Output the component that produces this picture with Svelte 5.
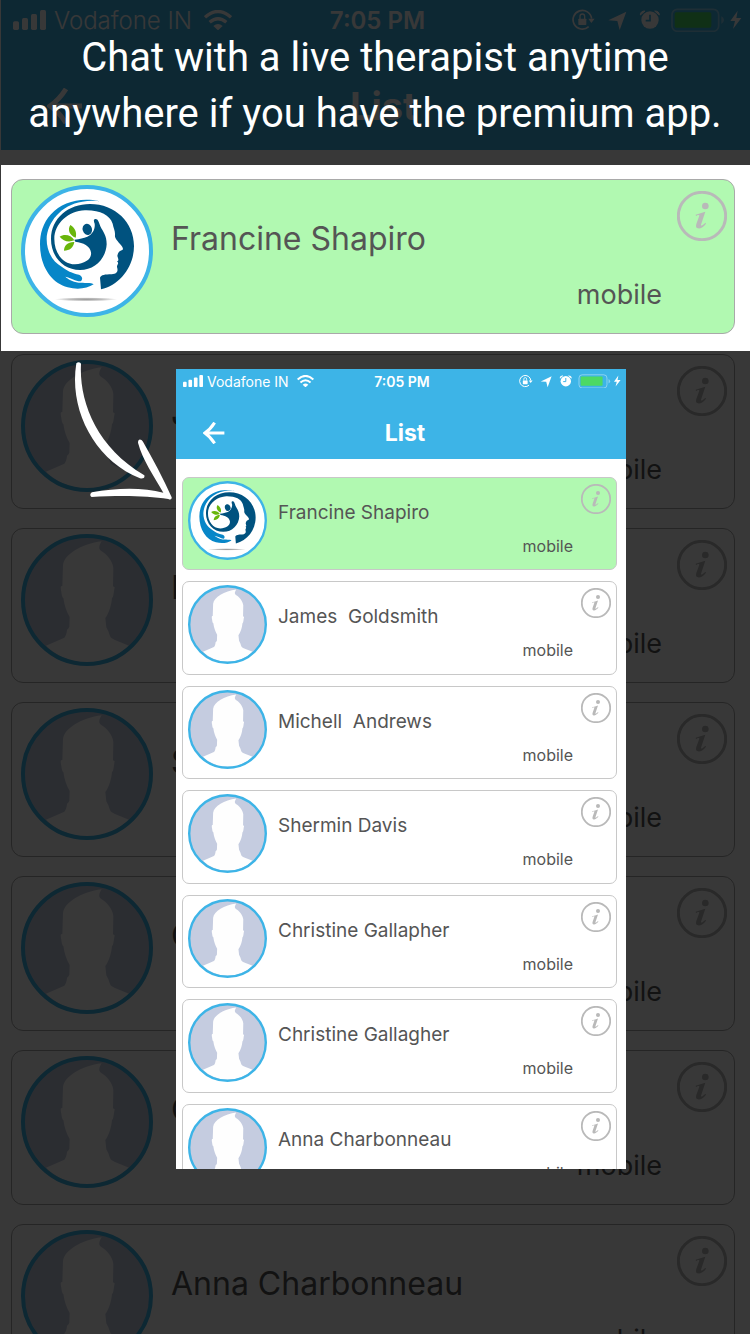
<script>
  const contacts = [
    { name: 'Francine Shapiro', premium: true },
    { name: 'James  Goldsmith' },
    { name: 'Michell  Andrews' },
    { name: 'Shermin Davis' },
    { name: 'Christine Gallapher' },
    { name: 'Christine Gallagher' },
    { name: 'Anna Charbonneau' }
  ];
</script>

{#snippet personPicture()}
  <svg class="avatar" viewBox="63 48 396 396" aria-hidden="true">
    <circle cx="261" cy="246" r="192" fill="#c5cce0" />
    <path fill="#fefefe" d="M305 70C245 78 193 108 189 142L187 204C180 202 182 212 184 222C185 232 187 239 190 240C193 262 199 280 209 297L208 326C206 333 202 331 201 337C200 345 198 354 193 359L138 383C205 450 320 450 387 383L345 366C328 359 331 355 325 340L319 328L316 300C326 286 334 264 336 240C341 238 341 222 344 208L339 205L340 150C338 128 320 108 303 98C294 92 298 81 305 70Z" />
    <circle class="ring" cx="261" cy="246" r="192" />
  </svg>
{/snippet}

{#snippet logoPicture()}
  <svg class="avatar" viewBox="63 60 396 396" aria-hidden="true">
    <defs>
      <radialGradient id="logo-shadow">
        <stop offset="0" stop-color="#999" />
        <stop offset="0.5" stop-color="#bbb" />
        <stop offset="1" stop-color="#fff" />
      </radialGradient>
    </defs>
    <circle cx="261" cy="258" r="192" fill="#fff" />
    <ellipse cx="258" cy="403" rx="94" ry="6" fill="url(#logo-shadow)" />
    <path fill="#0786c8" d="M299 109C240 96 186 112 153 148C129 174 120 205 120 238C120 304 154 354 203 367C232 375 262 371 281 358C275 352 250 354 236 353C216 350 204 342 196 335C214 338 228 350 242 349C249 343 248 334 237 329C218 325 198 316 185 305C158 291 140 259 140 222C141 173 183 119 247 110C265 107 282 107 299 109Z" />
    <path fill="#00527f" d="M153 222C153 160 205 117 270 117C345 117 402 172 402 243C402 305 360 360 303 373L300 338C303 330 315 328 335 328C352 327 355 318 351 306C350 299 359 296 351 289C359 286 353 279 352 272C355 264 355 260 365 256C373 252 367 245 360 237C347 222 344 217 345 210C346 198 340 188 338 176C329 150 300 135 255 136C205 138 163 175 163 222C163 262 187 298 225 298C255 296 276 282 273 262C270 242 250 233 226 230L223 224C240 222 250 219 262 215C278 208 286 192 284 176C280 168 281 161 287 162C294 162 297 172 301 184C310 202 320 212 320 238C318 280 285 315 240 315C190 315 153 275 153 222Z" />
    <ellipse cx="262" cy="193" rx="14" ry="17" transform="rotate(-18 262 193)" fill="#00527f" />
    <path fill="#69b60b" d="M227 218C208 211 202 194 211 180C224 188 232 202 227 218ZM223 226C205 233 190 228 179 215C192 206 214 209 223 226ZM223 231C220 248 209 257 192 257C192 242 204 230 223 231Z" />
    <circle class="ring" cx="261" cy="258" r="192" />
  </svg>
{/snippet}

{#snippet card(contact)}
  <article class="card" class:premium={contact.premium}>
    {#if contact.premium}{@render logoPicture()}{:else}{@render personPicture()}{/if}
    <div class="details">
      <h2>{contact.name}</h2>
      <p>mobile</p>
    </div>
    <button class="info" aria-label={`About ${contact.name}`}>
      <svg viewBox="531 78 150 150" aria-hidden="true">
        <circle cx="606" cy="153" r="71" fill="none" stroke="currentColor" stroke-width="9" />
        <circle cx="616" cy="123" r="10" fill="currentColor" />
        <path fill="currentColor" d="M587 149C597 147 606 142 616 140L603 179C602 185 609 180 616 173L618 176C611 186 602 191 594 190C587 189 587 182 590 174L598 152C598 148 592 150 588 153Z" />
      </svg>
    </button>
  </article>
{/snippet}

{#snippet app()}
  <header>
    <div class="status">
      <div class="carrier">
        <svg class="signal" viewBox="39 30 99 60" fill="currentColor" aria-hidden="true">
          <rect x="39" y="64" width="18" height="26" rx="5" />
          <rect x="66" y="54" width="18" height="36" rx="5" />
          <rect x="93" y="42" width="18" height="48" rx="5" />
          <rect x="120" y="30" width="18" height="60" rx="5" />
        </svg>
        <span>Vodafone IN</span>
        <svg class="wifi" viewBox="612 29 84 62" aria-hidden="true">
          <g fill="none" stroke="currentColor" stroke-width="10">
            <path d="M615 51Q654 16 693 51" />
            <path d="M629 66Q654 44 679 66" />
          </g>
          <path fill="currentColor" d="M640 77Q654 65 668 77L654 90Z" />
        </svg>
      </div>
      <time>7:05 PM</time>
      <svg class="indicators" viewBox="590 25 510 72" fill="currentColor" aria-hidden="true">
        <path fill="none" stroke="currentColor" stroke-width="5" d="M640 81A28 28 0 1 1 649 57" />
        <path d="M639 57H658L648 70Z" />
        <rect x="609" y="57" width="24" height="19" rx="2" />
        <path fill="none" stroke="currentColor" stroke-width="4" d="M614 58V50A7 7 0 0 1 628 50V58" />
        <path d="M753 36L733 91L726 64L699 62Z" />
        <circle cx="824" cy="61" r="26" />
        <path d="M795 46Q795 34 809 34ZM852 46Q852 34 838 34Z" stroke="currentColor" stroke-width="3" />
        <path class="hands" d="M824 45V63H811" />
        <rect x="890" y="29" width="140" height="66" rx="16" fill="none" stroke="currentColor" stroke-width="5" opacity="0.4" />
        <rect x="898" y="38" width="110" height="46" rx="5" fill="#4cd964" />
        <path d="M1038 50Q1046 54 1046 61Q1046 68 1038 73Z" opacity="0.4" />
        <path d="M1087 33L1065 64H1079L1073 88L1098 55H1083Z" />
      </svg>
    </div>
    <nav>
      <button class="back" aria-label="Back">
        <svg viewBox="47 88 36 36" fill="none" stroke="currentColor" stroke-width="5" aria-hidden="true">
          <path d="M66 89Q59 100 50 106Q59 112 66 123M50 106H82" />
        </svg>
      </button>
      <h1>List</h1>
    </nav>
  </header>
  <ul>
    {#each contacts as contact}
      <li>{@render card(contact)}</li>
    {/each}
  </ul>
{/snippet}

<main>
  <div class="app large">{@render app()}</div>
  <div class="shade"></div>
  <p class="caption">Chat with a live therapist anytime<br />anywhere if you have the premium app.</p>
  <section class="app preview" aria-label="Contact list">{@render app()}</section>
  <svg class="pointer" viewBox="219 30 300 426" fill="#fff" aria-hidden="true">
    <path d="M229 40C234 34 242 36 243 42C237 150 286 290 433 376C435 383 430 387 420 385C284 330 206 180 229 40Z" />
    <path d="M414 278C414 266 423 266 429 275C460 330 490 385 515 442C516 447 512 451 505 447C440 436 350 436 275 441C269 438 270 430 276 427C350 413 430 412 490 428C460 375 428 330 414 278Z" />
  </svg>
</main>

<style>
  :global(body) {
    margin: 0;
    background: #383838;
  }

  main {
    position: relative;
    height: 100vh;
    overflow: hidden;
    font-family: Inter, 'Liberation Sans', sans-serif;
    color: #555;
  }

  h1, h2, p, ul {
    margin: 0;
    padding: 0;
  }

  button {
    padding: 0;
    border: 0;
    background: none;
    color: inherit;
  }

  svg {
    display: block;
  }

  .app {
    background: #fff;
  }

  .large {
    margin-left: 1px;
    --status-height: 40px;
    --status-gap: 22px;
    --status-padding: 0 8px 0 12px;
    --status-text: 24px;
    --status-weight: 300;
    --item-gap: 8px;
    --signal: 33px;
    --wifi: 28px;
    --wifi-gap: 4px;
    --indicators: 170px;
    --nav-height: 88px;
    --nav-padding: 0 30px 0 46px;
    --back: 36px;
    --title: 38px;
    --card-padding: 0 7px 0 9px;
    --card-columns: 132px 1fr 50px;
    --avatar-top: 5px;
    --avatar-gap: 18px;
    --details-top: 39px;
    --details-gap: 20px;
    --details-end: 15px;
    --name: 32px;
    --name-line: 40px;
    --kind: 27px;
    --kind-line: 32px;
    --info-top: 11px;
    --radius: 12px;
    --line: #a9a9a9;
  }

  .preview {
    position: absolute;
    z-index: 3;
    top: 369px;
    left: 176px;
    width: 60%;
    height: 800px;
    overflow: hidden;
    --status-height: 24px;
    --status-gap: 14px;
    --status-padding: 0 5px 0 7px;
    --status-text: 14px;
    --status-weight: 400;
    --item-gap: 4px;
    --signal: 20px;
    --wifi: 17px;
    --wifi-gap: 4px;
    --indicators: 102px;
    --nav-height: 52px;
    --nav-padding: 0 19px 0 27px;
    --back: 22px;
    --title: 23px;
    --card-padding: 0 5px 0 5px;
    --card-columns: 79px 1fr 30px;
    --avatar-top: 3px;
    --avatar-gap: 11px;
    --details-top: 23px;
    --details-gap: 11px;
    --details-end: 8px;
    --name: 19px;
    --name-line: 24px;
    --kind: 16px;
    --kind-line: 20px;
    --info-top: 6px;
    --radius: 7px;
    --line: #c8c8c8;
  }

  header {
    background: #3db4e7;
    color: #fff;
  }

  .status {
    display: grid;
    grid-template-columns: 1fr auto 1fr;
    align-items: center;
    height: var(--status-height);
    margin-bottom: var(--status-gap);
    padding: var(--status-padding);
    font-size: var(--status-text);
  }

  .carrier {
    display: flex;
    align-items: center;
    gap: var(--item-gap);
    font-weight: var(--status-weight);
    white-space: nowrap;
  }

  .signal {
    width: var(--signal);
  }

  .wifi {
    width: var(--wifi);
    margin-left: var(--wifi-gap);
  }

  time {
    font-weight: 600;
  }

  .indicators {
    width: var(--indicators);
    justify-self: end;
  }

  .hands {
    fill: none;
    stroke: #3db4e7;
    stroke-width: 5;
  }

  nav {
    display: grid;
    grid-template-columns: 1fr auto 1fr;
    align-items: center;
    height: var(--nav-height);
    padding: var(--nav-padding);
  }

  .back svg {
    width: var(--back);
  }

  .back {
    justify-self: start;
  }

  h1 {
    font-size: var(--title);
    font-weight: 700;
  }

  ul {
    list-style: none;
  }

  .large ul {
    display: flex;
    flex-direction: column;
    gap: 19px;
    padding-top: 29px;
  }

  .large li {
    height: 155px;
    padding: 0 15px 0 10px;
  }

  .large li:first-child {
    position: relative;
    z-index: 2;
    margin: -14px 0 -16px;
    padding-top: 14px;
    padding-bottom: 17px;
    background: #fff;
  }

  .preview ul {
    display: grid;
    grid-auto-rows: 1fr;
    gap: 11px;
    height: 720px;
    padding: 18px 9px 0 6px;
  }

  .card {
    display: grid;
    grid-template-columns: var(--card-columns);
    box-sizing: border-box;
    height: 100%;
    padding: var(--card-padding);
    border: 1px solid var(--line);
    border-radius: var(--radius);
  }

  .premium {
    background: #b1f9b1;
  }

  .avatar {
    width: 100%;
    margin-top: var(--avatar-top);
  }

  .ring {
    fill: none;
    stroke: #3db4e7;
    stroke-width: 12;
  }

  .details {
    display: flex;
    flex-direction: column;
    gap: var(--details-gap);
    padding: var(--details-top) var(--details-end) 0 var(--avatar-gap);
  }

  h2 {
    font-size: var(--name);
    font-weight: 400;
    line-height: var(--name-line);
    white-space: pre;
  }

  .details p {
    font-size: var(--kind);
    line-height: var(--kind-line);
    text-align: right;
  }

  .info {
    align-self: start;
    margin-top: var(--info-top);
    color: #b9b9b9;
  }

  .shade {
    position: absolute;
    z-index: 1;
    inset: 0 0 0 1px;
    background: rgba(0, 0, 0, 0.78);
  }

  .caption {
    position: absolute;
    z-index: 3;
    top: 30px;
    left: 0;
    width: 100%;
    color: #fff;
    font-family: Roboto, sans-serif;
    font-size: 40px;
    line-height: 56px;
    text-align: center;
    white-space: nowrap;
  }

  .pointer {
    position: absolute;
    z-index: 3;
    top: 360px;
    left: 73px;
    width: 100px;
  }
</style>
